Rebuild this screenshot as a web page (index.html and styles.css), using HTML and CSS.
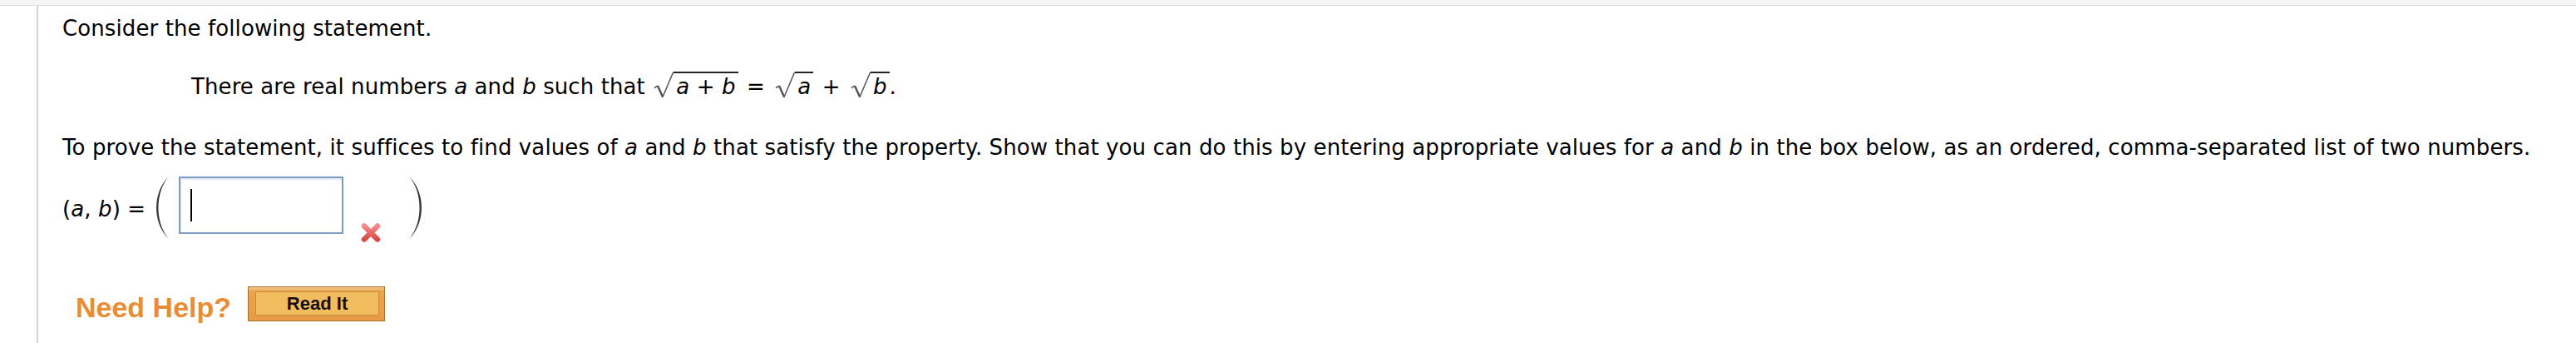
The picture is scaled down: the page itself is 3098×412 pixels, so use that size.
FILE: index.html
```html
<!DOCTYPE html>
<html lang="en">
<head>
<meta charset="utf-8">
<title>Question</title>
<link rel="stylesheet" href="styles.css">
</head>
<body>
<div class="topband"></div>
<div class="question">
  <div class="line intro">Consider the following statement.</div>
  <div class="line stmt">There are real numbers <i>a</i> and <i>b</i> such that <svg class="radical" viewBox="0 0 24 32"><path d="M1 19.5 L5 17.2 L11 30.5 L23.6 0.8" fill="none" stroke="#555" stroke-width="1.5" stroke-linejoin="round"/><path d="M5.2 17.4 L11 30.2" fill="none" stroke="#555" stroke-width="2.4"/></svg><span class="rad"><i>a</i> + <i>b</i></span> <span class="op">=</span> <svg class="radical" viewBox="0 0 24 32"><path d="M1 19.5 L5 17.2 L11 30.5 L23.6 0.8" fill="none" stroke="#555" stroke-width="1.5" stroke-linejoin="round"/><path d="M5.2 17.4 L11 30.2" fill="none" stroke="#555" stroke-width="2.4"/></svg><span class="rad"><i>a</i></span> <span class="op">+</span> <svg class="radical" viewBox="0 0 24 32"><path d="M1 19.5 L5 17.2 L11 30.5 L23.6 0.8" fill="none" stroke="#555" stroke-width="1.5" stroke-linejoin="round"/><path d="M5.2 17.4 L11 30.2" fill="none" stroke="#555" stroke-width="2.4"/></svg><span class="rad"><i>b</i></span>.</div>
  <div class="line instr">To prove the statement, it suffices to find values of <i>a</i> and <i>b</i> that satisfy the property. Show that you can do this by entering appropriate values for <i>a</i> and <i>b</i> in the box below, as an ordered, comma-separated list of two numbers.</div>
  <div class="answer-row">
    <div class="label">(<i>a</i>, <i>b</i>) =</div>
    <svg class="paren paren-l" viewBox="0 0 17 77"><path d="M16 1 C-4 20 -4 57 16 76 C-0.7 57 -0.7 20 16 1 Z" fill="#3a3a3a"/></svg>
    <div class="box"><div class="caret"></div></div>
    <svg class="mark" viewBox="0 0 26 25"><defs><linearGradient id="xg" x1="0" y1="0" x2="0" y2="1"><stop offset="0" stop-color="#f48a8a"/><stop offset="1" stop-color="#d94848"/></linearGradient></defs><path d="M5 4.5 L21 20.5 M21 4.5 L5 20.5" stroke="url(#xg)" stroke-width="6.5" stroke-linecap="round"/></svg>
    <svg class="paren paren-r" viewBox="0 0 17 77"><path d="M1 1 C21 20 21 57 1 76 C17.7 57 17.7 20 1 1 Z" fill="#3a3a3a"/></svg>
  </div>
  <div class="help-row">
    <div class="need-help">Need Help?</div>
    <a class="read-it"><span class="read-it-inner">Read It</span></a>
  </div>
</div>
</body>
</html>
```

FILE: styles.css
```css
html, body {
  margin: 0;
  height: 100%;
}

body {
  display: flex;
  flex-direction: column;
  background: #fff;
  color: #000;
  font-family: "DejaVu Sans", Verdana, sans-serif;
  font-size: 26px;
  line-height: 30px;
  letter-spacing: 0.1px;
}

.topband {
  flex: none;
  height: 6px;
  background: #f4f4f4;
  border-bottom: 1px solid #dcdcdc;
}

.question {
  flex: 1;
  margin-left: 44px;
  border-left: 2px solid #d3d3d3;
  padding: 12px 0 0 29px;
}

.line {
  height: 30px;
  white-space: nowrap;
}

.stmt {
  margin-top: 37px;
  padding-left: 155px;
}

.radical {
  display: inline-block;
  width: 24px;
  height: 32px;
  margin-left: 2px;
  vertical-align: -5px;
}

.rad {
  display: inline-block;
  border-top: 2px solid #222;
  padding: 1px 3px 0;
  line-height: 30px;
}

.op {
  margin: 0 2px;
}

.instr {
  margin-top: 46px;
}

.answer-row {
  display: flex;
  align-items: flex-start;
  margin-top: 19px;
  height: 77px;
}

.label {
  margin-top: 25px;
  white-space: nowrap;
}

.paren {
  flex: none;
  width: 17px;
  height: 77px;
}

.paren-l {
  margin-left: 12px;
}

.box {
  flex: none;
  margin-left: 11px;
  margin-top: 1px;
  width: 198px;
  height: 69px;
  box-sizing: border-box;
  border: 2px solid #7c9ec6;
  background: #fff;
  box-shadow: inset 1px 2px 2px rgba(110, 135, 170, 0.2);
  padding: 13px 0 0 12px;
}

.caret {
  width: 2px;
  height: 39px;
  background: #000;
}

.mark {
  flex: none;
  margin-left: 20px;
  margin-top: 56px;
  width: 26px;
  height: 25px;
}

.paren-r {
  margin-left: 32px;
}

.help-row {
  display: flex;
  align-items: flex-start;
  margin-top: 56px;
  padding-left: 16px;
}

.need-help {
  font-family: "Liberation Sans", Arial, sans-serif;
  font-weight: bold;
  font-size: 34px;
  line-height: 38px;
  letter-spacing: 0;
  color: #e98c34;
  margin-top: 6px;
}

.read-it {
  display: block;
  margin-left: 20px;
  width: 165px;
  height: 42px;
  box-sizing: border-box;
  border: 1px solid #a8702f;
  background: linear-gradient(#f5c88d 0, #eca44f 5px, #e89a45 100%);
  padding: 5px 6px 6px 8px;
}

.read-it-inner {
  display: flex;
  align-items: center;
  justify-content: center;
  height: 29px;
  box-sizing: border-box;
  border: 1px solid #c48a3e;
  background: #f2bd5e;
  font-family: "Liberation Sans", Arial, sans-serif;
  font-weight: bold;
  font-size: 22px;
  letter-spacing: 0;
  color: #111;
}
```
